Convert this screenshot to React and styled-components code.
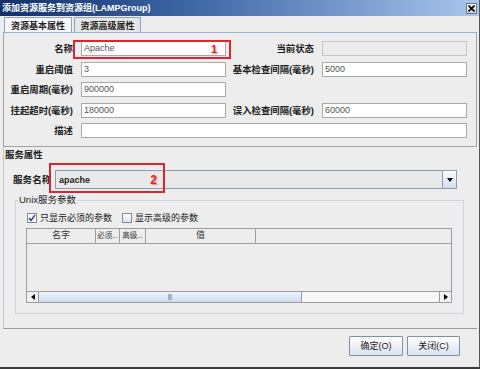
import React from "react";
import styled, { createGlobalStyle } from "styled-components";

const CJK = `"Noto Sans CJK SC", "Liberation Sans", sans-serif`;
const LATIN = `"Liberation Sans", "Noto Sans CJK SC", sans-serif`;

const GlobalStyle = createGlobalStyle`
  html, body { margin: 0; padding: 0; background: #ededed; }
  body { font-family: ${LATIN}; }
`;

const Window = styled.div`
  width: 480px;
  height: 369px;
  box-sizing: border-box;
  background: #ededed;
  border-right: 1px solid #555;
  border-bottom: 2px solid #3a3a3a;
  display: flex;
  flex-direction: column;
  overflow: hidden;
`;

const TitleBar = styled.div`
  height: 16px;
  flex: none;
  display: flex;
  align-items: center;
  justify-content: space-between;
  padding: 0 2px;
  background: linear-gradient(to right, #12306a 0%, #3f66a6 40%, #a9c6ec 100%);
  color: #fff;
  font: bold 9px/12px ${LATIN};
`;

const CloseBtn = styled.div`
  width: 11px;
  height: 11px;
  box-sizing: border-box;
  border: 1px solid #6a7a8c;
  background: linear-gradient(#f6f6f6, #d4d4d4);
  display: flex;
  align-items: center;
  justify-content: center;
`;

const TabStrip = styled.div`
  height: 16px;
  flex: none;
  box-sizing: border-box;
  display: flex;
  align-items: flex-end;
  gap: 2px;
  padding-left: 4px;
`;

const Tab = styled.div`
  width: ${(p) => p.$w}px;
  height: 15px;
  box-sizing: border-box;
  border: 1px solid #8fa3bd;
  border-bottom: none;
  background: ${(p) => (p.$active ? "#f5f7fa" : "#e6e6e6")};
  font: bold 9px/13px ${CJK};
  color: #1e1e1e;
  display: flex;
  align-items: center;
  justify-content: center;
`;

const TabPanel = styled.div`
  margin: 0 2px 0 3px;
  border: 1px solid #a3a3a3;
  border-top-color: #9db2cf;
  display: grid;
  grid-template-columns: 70px 145px 84px 145px;
  column-gap: 6px;
  row-gap: 5.6px;
  padding: 8px 0 8px 1px;
`;

const Label = styled.div`
  font: bold 9.4px/15px ${LATIN};
  color: #202020;
  text-align: right;
  padding-right: 2px;
  white-space: nowrap;
`;

const Field = styled.div`
  position: relative;
  height: 15px;
  box-sizing: border-box;
  border: 1px solid ${(p) => (p.$disabled ? "#c4c4c4" : "#a9a9a9")};
  background: ${(p) => (p.$disabled ? "#ececec" : "#fff")};
  grid-column: ${(p) => p.$span || "auto"};
  font: 9px/13px ${LATIN};
  color: #555;
  padding-left: 2px;
`;

const Mark = styled.div`
  position: absolute;
  left: ${(p) => p.$l}px;
  top: ${(p) => p.$t}px;
  width: ${(p) => p.$w}px;
  height: ${(p) => p.$h}px;
  box-sizing: border-box;
  border: 2px solid #e0262c;
  pointer-events: none;
`;

const MarkNum = styled.span`
  position: absolute;
  right: ${(p) => p.$r}px;
  top: ${(p) => p.$t}px;
  font: bold ${(p) => p.$s}px/1 ${LATIN};
  color: #e0262c;
  text-shadow: 1px 1px 1px rgba(120, 0, 0, 0.35);
`;

const Section = styled.div`
  margin: 0 2px 0 3px;
  border-left: 1px solid #c4c4c4;
  border-bottom: 1px solid #9a9a9a;
  padding: 1px 0 14px 0;
  display: flex;
  flex-direction: column;
`;

const SectionTitle = styled.div`
  font: bold 9.4px/12px ${CJK};
  color: #202020;
  padding-left: 1px;
`;

const ComboRow = styled.div`
  display: flex;
  align-items: center;
  margin-top: 10px;
  padding-left: 9px;
`;

const ComboLabel = styled.div`
  width: 42px;
  overflow: hidden;
  white-space: nowrap;
  font: bold 9.6px/19px ${CJK};
  color: #202020;
`;

const Combo = styled.div`
  position: relative;
  width: 402px;
  height: 19px;
  box-sizing: border-box;
  border: 1px solid #8e9cb0;
  background: #e9e9e9;
  display: flex;
  align-items: center;
  justify-content: space-between;
  font: bold 9px ${LATIN};
  color: #222;
  padding-left: 3px;
`;

const DropBtn = styled.div`
  width: 14px;
  height: 17px;
  box-sizing: border-box;
  border-left: 1px solid #8e9cb0;
  background: linear-gradient(#fbfcfe, #d3dce8);
  display: flex;
  align-items: center;
  justify-content: center;
`;

const Group = styled.fieldset`
  margin: 5px 13px 0 11px;
  padding: 0 0 10px 0;
  border: 1px solid #cbd3de;
  min-width: 0;
`;

const Legend = styled.legend`
  font: 9.5px/12px ${LATIN};
  color: #202020;
  padding: 0 1px;
  margin-left: 2px;
`;

const CheckRow = styled.div`
  display: flex;
  align-items: center;
  margin-top: 7px;
  padding-left: 11px;
  height: 10px;
`;

const CheckItem = styled.label`
  display: flex;
  align-items: center;
  gap: 3px;
  margin-right: 10px;
  font: 9px/10px ${CJK};
  color: #202020;
`;

const Box = styled.span`
  width: 10px;
  height: 10px;
  box-sizing: border-box;
  border: 1px solid #7c8c9e;
  background: ${(p) => (p.$checked ? "#fff" : "linear-gradient(#fdfdfd, #dde4ec)")};
  display: flex;
  align-items: center;
  justify-content: center;
`;

const Table = styled.div`
  margin: 5px 11px 0 10px;
  height: 75px;
  box-sizing: border-box;
  border: 1px solid #9c9c9c;
  display: flex;
  flex-direction: column;
`;

const HeadRow = styled.div`
  display: flex;
  height: 14px;
  flex: none;
  border-bottom: 1px solid #9c9c9c;
`;

const HeadCell = styled.div`
  width: ${(p) => (p.$w ? `${p.$w}px` : "auto")};
  flex: ${(p) => (p.$w ? "none" : 1)};
  box-sizing: border-box;
  border-right: ${(p) => (p.$w ? "1px solid #9c9c9c" : "none")};
  font: ${(p) => (p.$small ? "7.5px" : "9px")}/13px ${LATIN};
  letter-spacing: ${(p) => (p.$small ? "-0.2px" : "0")};
  color: #333;
  text-align: center;
  white-space: nowrap;
  overflow: hidden;
`;

const TableBody = styled.div`
  flex: 1;
`;

const ScrollBar = styled.div`
  height: 11px;
  flex: none;
  display: flex;
  border-top: 1px solid #9c9c9c;
  box-sizing: border-box;
`;

const Arrow = styled.div`
  width: 11px;
  flex: none;
  display: flex;
  align-items: center;
  justify-content: center;
  background: #f2f2f2;
  border-${(p) => (p.$side === "left" ? "right" : "left")}: 1px solid #9c9c9c;
`;

const Track = styled.div`
  flex: 1;
  display: flex;
  background: #f7f7f7;
`;

const Thumb = styled.div`
  width: 263px;
  box-sizing: border-box;
  border-right: 1px solid #8e9cb0;
  background: linear-gradient(#eef4fc, #cddcf0);
  display: flex;
  align-items: center;
  justify-content: center;
`;

const Grip = styled.span`
  width: 4px;
  height: 6px;
  background: #9fb2cc;
`;

const Footer = styled.div`
  flex: 1;
  display: flex;
  justify-content: flex-end;
  align-items: flex-start;
  gap: 4px;
  padding: 7px 19px 0 0;
`;

const Button = styled.button`
  width: ${(p) => p.$w}px;
  height: 20px;
  box-sizing: border-box;
  border: 1px solid #7f90a8;
  border-radius: 1px;
  background: linear-gradient(#ffffff, #dbe4ef);
  font: 9px/1 ${LATIN};
  color: #1a1a1a;
  padding: 0;
`;

const Caret = ({ dir }) => {
  const pts = {
    down: "0,0 6,0 3,4",
    left: "4,0 4,6 0,3",
    right: "0,0 0,6 4,3",
  };
  const size = dir === "down" ? [6, 4] : [4, 6];
  return (
    <svg width={size[0]} height={size[1]} viewBox={`0 0 ${size[0]} ${size[1]}`}>
      <polygon points={pts[dir]} fill="#000" />
    </svg>
  );
};

const fields = [
  { label: "重启阈值", value: "3", label2: "基本检查间隔(毫秒)", value2: "5000" },
  { label: "重启周期(毫秒)", value: "900000" },
  { label: "挂起超时(毫秒)", value: "180000", label2: "误入检查间隔(毫秒)", value2: "60000" },
];

const App = () => {
  return (
    <Window>
      <GlobalStyle />
      <TitleBar>
        <span>添加资源服务到资源组(LAMPGroup)</span>
        <CloseBtn>
          <svg width="7" height="7" viewBox="0 0 7 7">
            <path d="M0.5 0.5 L6.5 6.5 M6.5 0.5 L0.5 6.5" stroke="#000" strokeWidth="1.6" />
          </svg>
        </CloseBtn>
      </TitleBar>

      <TabStrip>
        <Tab $w={68} $active>资源基本属性</Tab>
        <Tab $w={67}>资源高级属性</Tab>
      </TabStrip>

      <TabPanel>
        <Label>名称</Label>
        <Field>
          Apache
          <Mark $l={-9} $t={-2} $w={158} $h={19}>
            <MarkNum $r={12} $t={2} $s={11}>1</MarkNum>
          </Mark>
        </Field>
        <Label>当前状态</Label>
        <Field $disabled />

        {fields.map((f) => (
          <React.Fragment key={f.label}>
            <Label>{f.label}</Label>
            <Field>{f.value}</Field>
            {f.label2 ? (
              <>
                <Label>{f.label2}</Label>
                <Field>{f.value2}</Field>
              </>
            ) : (
              <span style={{ gridColumn: "span 2" }} />
            )}
          </React.Fragment>
        ))}

        <Label>描述</Label>
        <Field $span="span 3" />
      </TabPanel>

      <Section>
        <SectionTitle>服务属性</SectionTitle>
        <ComboRow>
          <ComboLabel>服务名称</ComboLabel>
          <Combo>
            apache
            <DropBtn>
              <Caret dir="down" />
            </DropBtn>
            <Mark $l={-7} $t={-8} $w={116} $h={30}>
              <MarkNum $r={6} $t={9} $s={12}>2</MarkNum>
            </Mark>
          </Combo>
        </ComboRow>

        <Group>
          <Legend>Unix服务参数</Legend>
          <CheckRow>
            <CheckItem>
              <Box $checked>
                <svg width="8" height="8" viewBox="0 0 8 8">
                  <path d="M1 4 L3 6.5 L7 1" stroke="#2b4f86" strokeWidth="1.6" fill="none" />
                </svg>
              </Box>
              只显示必须的参数
            </CheckItem>
            <CheckItem>
              <Box />
              显示高级的参数
            </CheckItem>
          </CheckRow>

          <Table>
            <HeadRow>
              <HeadCell $w={69}>名字</HeadCell>
              <HeadCell $w={24} $small>必须...</HeadCell>
              <HeadCell $w={26} $small>高级...</HeadCell>
              <HeadCell $w={110}>值</HeadCell>
              <HeadCell />
            </HeadRow>
            <TableBody />
            <ScrollBar>
              <Arrow $side="left">
                <Caret dir="left" />
              </Arrow>
              <Track>
                <Thumb>
                  <Grip />
                </Thumb>
              </Track>
              <Arrow $side="right">
                <Caret dir="right" />
              </Arrow>
            </ScrollBar>
          </Table>
        </Group>
      </Section>

      <Footer>
        <Button $w={54}>确定(O)</Button>
        <Button $w={53}>关闭(C)</Button>
      </Footer>
    </Window>
  );
};

export default App;
